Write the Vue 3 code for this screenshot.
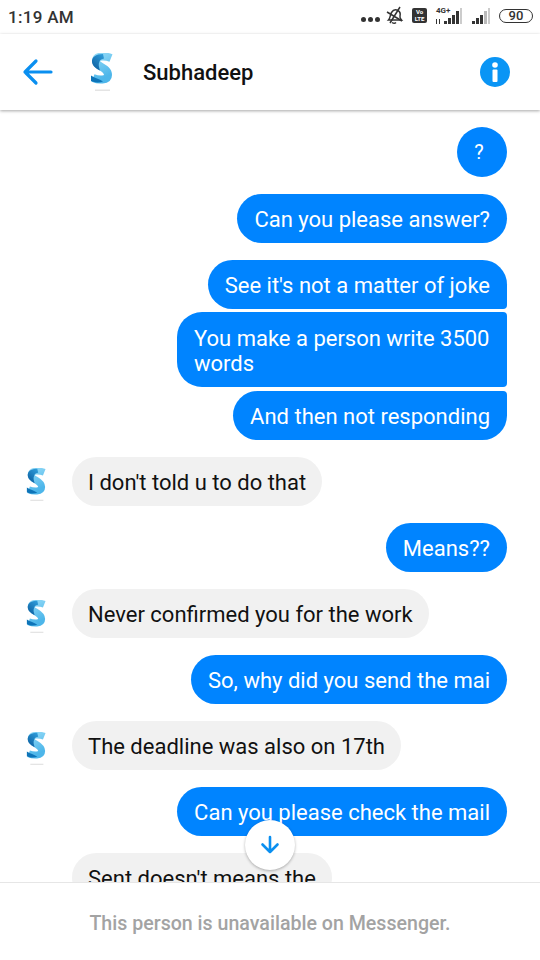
<script setup>
const messages = [
  { id: 1, me: true, text: '?', round: true },
  { id: 2, me: true, text: 'Can you please answer?' },
  { id: 3, me: true, text: "See it's not a matter of joke", pos: 'first' },
  { id: 4, me: true, text: 'You make a person write 3500 words', pos: 'mid' },
  { id: 5, me: true, text: 'And then not responding', pos: 'last' },
  { id: 6, me: false, text: "I don't told u to do that", avatar: true },
  { id: 7, me: true, text: 'Means??' },
  { id: 8, me: false, text: 'Never confirmed you for the work', avatar: true },
  { id: 9, me: true, text: 'So, why did you send the mai' },
  { id: 10, me: false, text: 'The deadline was also on 17th', avatar: true },
  { id: 11, me: true, text: 'Can you please check the mail' },
  { id: 12, me: false, text: "Sent doesn't means the", avatar: false }
]
</script>

<template>
  <div class="phone">
    <div class="status">
      <span class="time">1:19 AM</span>
      <div class="status-icons">
        <span class="dots"><i></i><i></i><i></i></span>
        <svg class="bell" width="18" height="19" viewBox="0 0 18 19" fill="none" stroke="#333" stroke-width="1.5">
          <path d="M2.500 14c2-2 1.500-5 3-7.500S9.500 3 12 4.500 14.500 8 14 10s.5 3 1.500 4z" />
          <path d="M6 16.500c1.500 1 3 1 4 0" />
          <path d="M1 6l15 9M14 1L4 17" />
        </svg>
        <span class="volte">Vo<br />LTE</span>
        <span class="net">
          <span class="net-label">4G+</span>
          <svg width="28" height="18" viewBox="0 0 28 18">
            <g fill="#333">
              <rect x="9" y="14" width="3" height="3" />
              <rect x="13" y="11" width="3" height="6" />
              <rect x="17" y="8" width="3" height="9" />
              <rect x="21" y="4" width="3" height="13" />
              <rect x="1" y="12" width="1" height="5" />
              <rect x="4" y="12" width="1" height="5" />
            </g>
            <rect x="25" y="1" width="2" height="16" fill="#ccc" />
          </svg>
        </span>
        <svg width="20" height="18" viewBox="0 0 20 18">
          <g fill="#333">
            <rect x="1" y="14" width="3" height="3" />
            <rect x="5" y="11" width="3" height="6" />
            <rect x="9" y="8" width="3" height="9" />
          </g>
          <rect x="13" y="4" width="3" height="13" fill="#bbb" />
          <rect x="17" y="1" width="2" height="16" fill="#ccc" />
        </svg>
        <span class="battery">90</span>
      </div>
    </div>

    <header class="header">
      <svg class="back" width="32" height="28" viewBox="0 0 32 28" fill="none" stroke="#0a8ff0" stroke-width="3.200" stroke-linecap="round" stroke-linejoin="round">
        <path d="M3 14h26M14 3L3 14l11 11" />
      </svg>
      <svg class="logo" width="23" height="38" viewBox="0 0 23 38">
        <defs>
          <linearGradient id="sLight" x1="0" y1="0" x2="0.400" y2="1">
            <stop offset="0" stop-color="#8fd8f6" />
            <stop offset="1" stop-color="#4db6ea" />
          </linearGradient>
          <linearGradient id="sDark" x1="0.800" y1="0" x2="0.200" y2="1">
            <stop offset="0" stop-color="#2d9ad8" />
            <stop offset="1" stop-color="#0c5e9f" />
          </linearGradient>
        </defs>
        <g id="s-mark">
          <path d="M21 5C16 3 6 2 6 8c0 6 12 6 12 14 0 6-10 5-15 3" fill="none" stroke="url(#sLight)" stroke-width="8" />
          <path d="M13 1C6 1 1.500 4 2 9c.5 4 4 6.500 8 8.500-1-3-2-6-.5-9C10 6.500 12 6 14 5.500z" fill="url(#sDark)" />
          <path d="M1 22.500c4 2.500 8 3.500 12 6-4 1.500-9 1-12-.5z" fill="#0e74b8" />
          <rect x="5" y="36.500" width="15" height="1.500" fill="#e4e4e4" />
        </g>
      </svg>
      <span class="name">Subhadeep</span>
      <svg class="info" width="32" height="32" viewBox="0 0 32 32">
        <circle cx="16" cy="16" r="15" fill="#0a95f5" />
        <circle cx="16" cy="9" r="2.800" fill="#fff" />
        <rect x="13.500" y="13.500" width="5" height="12.500" rx="1" fill="#fff" />
      </svg>
    </header>

    <main class="thread">
      <div
        v-for="m in messages"
        :key="m.id"
        class="row"
        :class="[m.me ? 'row-me' : 'row-them', m.pos ? 'tight-' + m.pos : '']"
      >
        <svg v-if="!m.me" class="avatar" :class="{ hidden: !m.avatar }" width="20" height="33" viewBox="0 0 23 38">
          <use href="#s-mark" />
        </svg>
        <div class="bubble" :class="[m.me ? 'me' : 'them', m.pos, { round: m.round }]">{{ m.text }}</div>
      </div>
      <button class="jump" type="button" aria-label="Scroll to latest">
        <svg width="20" height="20" viewBox="0 0 20 20" fill="none" stroke="#0a8ff0" stroke-width="2.600" stroke-linecap="round" stroke-linejoin="round">
          <path d="M10 2v15M2.500 9.500L10 17l7.500-7.500" />
        </svg>
      </button>
    </main>

    <footer class="footer">This person is unavailable on Messenger.</footer>
  </div>
</template>

<style>
html, body { margin: 0; background: #fff; }
</style>

<style scoped>
.phone {
  width: 540px;
  height: 960px;
  display: flex;
  flex-direction: column;
  overflow: hidden;
  background: #fff;
  font-family: Roboto, "Liberation Sans", sans-serif;
}
.status {
  height: 34px;
  flex: none;
  display: flex;
  align-items: center;
  justify-content: space-between;
  padding: 0 7px 0 8px;
  color: #333;
}
.time { font-size: 17px; font-weight: 500; letter-spacing: 0.3px; }
.status-icons { display: flex; align-items: center; gap: 8px; margin-top: -3px; }
.dots { display: flex; gap: 2px; margin-right: -2px; margin-top: 8px; }
.dots i { width: 5px; height: 5px; border-radius: 50%; background: #333; }
.volte {
  width: 15px; height: 15px; background: #333; color: #fff; border-radius: 2px;
  font-size: 6px; line-height: 7px; font-weight: 700; text-align: center;
}
.net { position: relative; display: block; height: 18px; }
.net-label { position: absolute; top: 0; left: 1px; font-size: 8px; line-height: 8px; font-weight: 700; }
.battery {
  width: 34px; height: 14px; box-sizing: border-box; border: 1.500px solid #333; border-radius: 8px;
  font-size: 13px; line-height: 12px; font-weight: 500; text-align: center;
}
.header {
  height: 76px;
  flex: none;
  display: flex;
  align-items: center;
  padding: 0 29px 0 22px;
  background: #fff;
  box-shadow: 0 1px 3px rgba(0, 0, 0, 0.35);
  position: relative;
  z-index: 2;
  box-sizing: border-box;
}
.back { margin-right: 36px; }
.logo { margin-right: 30px; }
.name { flex: 1; font-size: 22px; font-weight: 500; color: #111; }
.thread {
  flex: 1;
  min-height: 0;
  overflow: hidden;
  position: relative;
  display: flex;
  flex-direction: column;
  padding: 17px 33px 0 26px;
}
.row { display: flex; align-items: center; margin-bottom: 17px; flex: none; }
.row-me { justify-content: flex-end; }
.row.tight-first { margin-bottom: 3px; }
.row.tight-mid { margin-bottom: 4px; }
.avatar { margin-right: 26px; margin-top: 6px; flex: none; }
.avatar.hidden { visibility: hidden; }
.bubble {
  box-sizing: border-box;
  padding: 13px 17px 11px;
  border-radius: 25px;
  font-size: 22px;
  line-height: 25px;
}
.me { background: #0084ff; color: #fff; max-width: 330px; }
.them { background: #f1f1f1; color: #111; padding-left: 16px; padding-right: 16px; }
.round { width: 50px; height: 50px; padding: 13px 6px 0 0; text-align: center; font-size: 20px; }
.first { border-bottom-right-radius: 4px; }
.mid { padding-top: 14px; border-top-right-radius: 4px; border-bottom-right-radius: 4px; }
.last { border-top-right-radius: 4px; }
.jump {
  position: absolute;
  left: 245px;
  top: 710px;
  width: 50px;
  height: 50px;
  padding: 0;
  border: 0;
  border-radius: 50%;
  background: #fff;
  box-shadow: 0 1px 3px rgba(0, 0, 0, 0.3);
  display: flex;
  align-items: center;
  justify-content: center;
}
.footer {
  height: 78px;
  flex: none;
  box-sizing: border-box;
  border-top: 1px solid #e6e6e6;
  background: #fff;
  padding-top: 4px;
  display: flex;
  align-items: center;
  justify-content: center;
  color: #a3a3a3;
  font-size: 19.600px;
  font-weight: 500;
  position: relative;
  z-index: 1;
}
</style>
